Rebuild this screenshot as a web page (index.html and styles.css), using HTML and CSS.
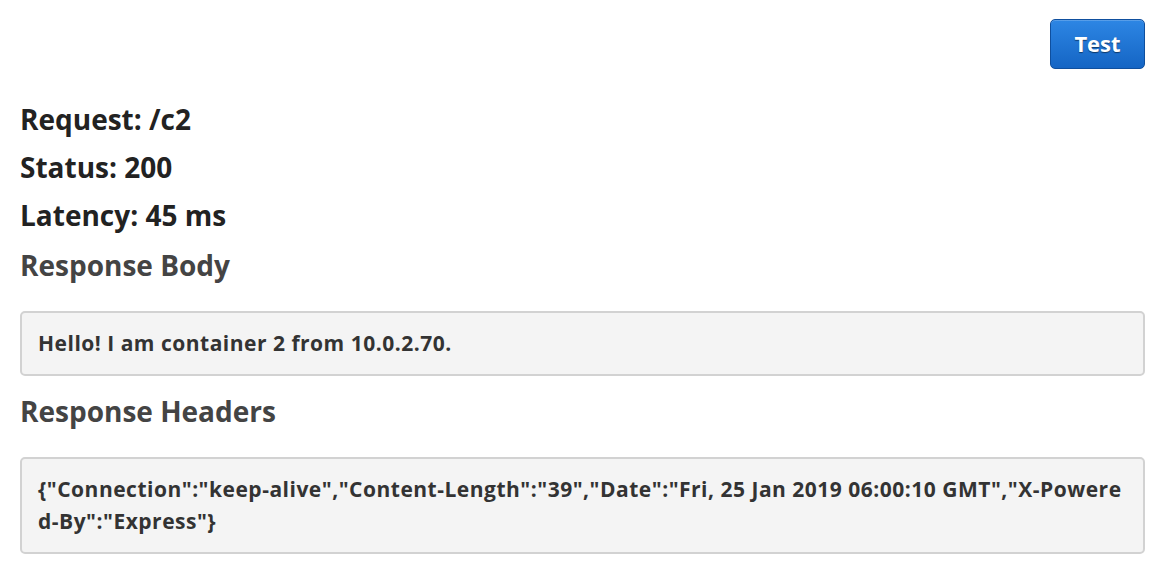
FILE: index.html
```html
<!DOCTYPE html>
<html>
<head>
<meta charset="utf-8">
<link rel="stylesheet" href="styles.css">
</head>
<body>
<div class="page">
  <div class="toolbar">
    <button class="btn">Test</button>
  </div>
  <div class="result">
    <h4 class="line">Request: /c2</h4>
    <h4 class="line">Status: 200</h4>
    <h4 class="line">Latency: 45 ms</h4>
    <h3 class="section">Response Body</h3>
    <pre class="box">Hello! I am container 2 from 10.0.2.70.</pre>
    <h3 class="section">Response Headers</h3>
    <pre class="box">{"Connection":"keep-alive","Content-Length":"39","Date":"Fri, 25 Jan 2019 06:00:10 GMT","X-Powered-By":"Express"}</pre>
  </div>
</div>
</body>
</html>
```

FILE: styles.css
```css
html, body {
  margin: 0;
  padding: 0;
  background: #fff;
}
body {
  font-family: "Open Sans", "Noto Sans", sans-serif;
  color: #222;
}
.page {
  padding: 19px 16px 0 20px;
}
.toolbar {
  display: flex;
  justify-content: flex-end;
}
.btn {
  width: 95px;
  height: 50px;
  border: 1px solid #0f4f9e;
  border-radius: 5px;
  background: linear-gradient(#2d86e4, #1565c4);
  color: #fff;
  font-family: inherit;
  font-weight: 700;
  font-size: 22px;
  text-shadow: 0 1px 1px rgba(0,0,0,0.5);
  box-shadow: inset 0 1px 0 rgba(255,255,255,0.2);
  padding: 0 0 3px;
}
.result {
  margin-top: 26px;
}
.line {
  margin: 0;
  font-size: 28px;
  font-weight: 700;
  line-height: 48px;
  color: #222;
}
.section {
  margin: 0;
  font-size: 28px;
  font-weight: 700;
  line-height: 53px;
  color: #444;
}
.box {
  margin: 19px 0 9px;
  padding: 14px 17px 15px 16px;
  background: #f4f4f4;
  border: 2px solid #d2d2d2;
  border-radius: 5px;
  font-family: inherit;
  font-weight: 700;
  font-size: 21px;
  letter-spacing: 0.5px;
  line-height: 32px;
  color: #333;
  white-space: pre-wrap;
  word-break: break-all;
}
```
